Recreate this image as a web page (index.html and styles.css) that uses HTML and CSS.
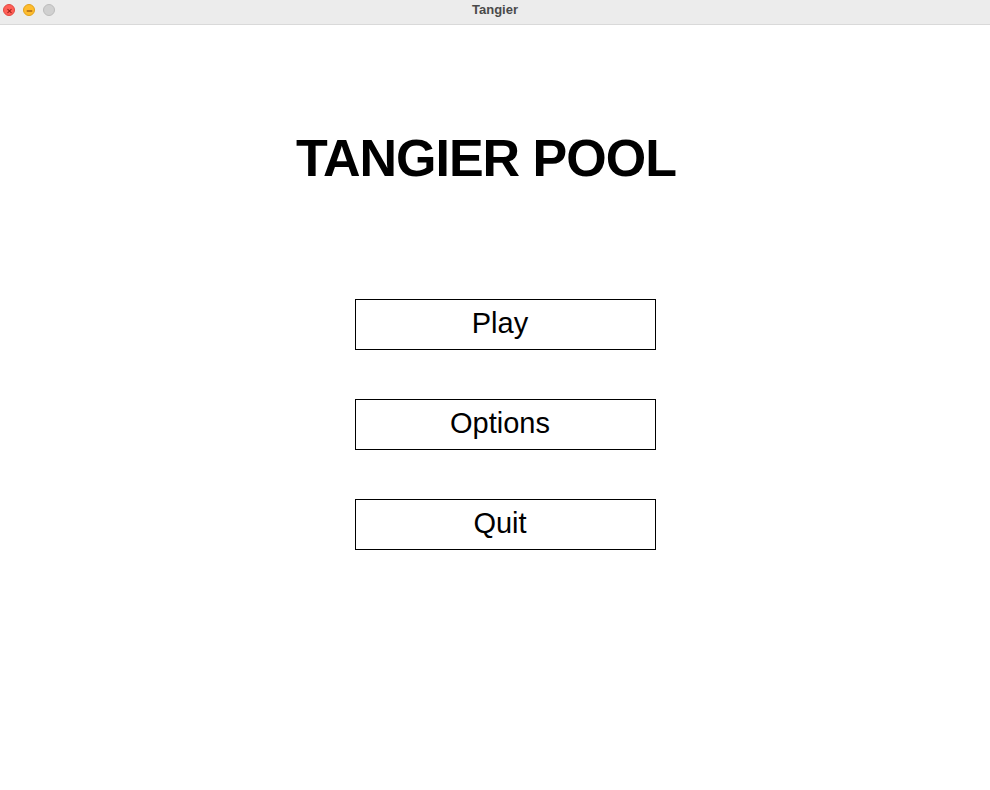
FILE: index.html
```html
<!DOCTYPE html>
<html>
<head>
<meta charset="utf-8">
<link rel="stylesheet" href="styles.css">
</head>
<body>
<div class="window">
  <div class="titlebar">
    <div class="lights">
      <span class="light close"><svg width="12" height="12" viewBox="0 0 12 12"><path d="M3.8 3.8 L8.2 8.2 M8.2 3.8 L3.8 8.2" stroke="#8c1a10" stroke-width="1.1"/></svg></span>
      <span class="light min"><svg width="12" height="12" viewBox="0 0 12 12"><path d="M3 6 H9" stroke="#985712" stroke-width="1.4"/></svg></span>
      <span class="light max"></span>
    </div>
    <div class="wtitle">Tangier</div>
  </div>
  <main class="content">
    <h1 class="game-title">TANGIER POOL</h1>
    <div class="menu">
      <button class="menu-btn">Play</button>
      <button class="menu-btn">Options</button>
      <button class="menu-btn">Quit</button>
    </div>
  </main>
</div>
</body>
</html>
```
FILE: styles.css
```css
html, body {
  margin: 0;
  padding: 0;
  background: #ffffff;
  font-family: "Liberation Sans", Arial, sans-serif;
}
.window {
  width: 990px;
  height: 790px;
  display: flex;
  flex-direction: column;
}
.titlebar {
  height: 24px;
  background: #ececec;
  border-bottom: 1px solid #d9d9d9;
  display: flex;
  align-items: center;
  position: relative;
  flex-shrink: 0;
}
.lights {
  display: flex;
  gap: 8px;
  padding-left: 3px;
  align-items: center;
  margin-top: -4px;
}
.light {
  width: 12px;
  height: 12px;
  border-radius: 50%;
  box-sizing: border-box;
  display: flex;
}
.close { background: #ff5f57; border: 0.5px solid #e2463f; }
.min { background: #febc2e; border: 0.5px solid #e1a116; }
.max { background: #d0d0d0; border: 0.5px solid #bcbcbc; }
.light svg { display: block; margin: -0.5px; }
.wtitle {
  position: absolute;
  left: 0;
  right: 0;
  top: 2px;
  text-align: center;
  font-weight: bold;
  font-size: 13px;
  color: #4a4a4a;
}
.content {
  display: flex;
  flex-direction: column;
  align-items: center;
}
.game-title {
  margin: 102px 0 0 0;
  font-size: 52px;
  line-height: 62px;
  font-weight: bold;
  color: #000;
  letter-spacing: -1px;
  position: relative;
  left: -9px;
}
.menu {
  margin-top: 110px;
  display: flex;
  flex-direction: column;
  gap: 49px;
  position: relative;
  left: 10px;
}
.menu-btn {
  width: 301px;
  height: 51px;
  box-sizing: border-box;
  border: 1px solid #000;
  background: #fff;
  font-family: "Liberation Sans", Arial, sans-serif;
  font-size: 29px;
  color: #000;
  padding: 0 10px 2px 0;
  margin: 0;
  line-height: 47px;
  text-align: center;
}
```
